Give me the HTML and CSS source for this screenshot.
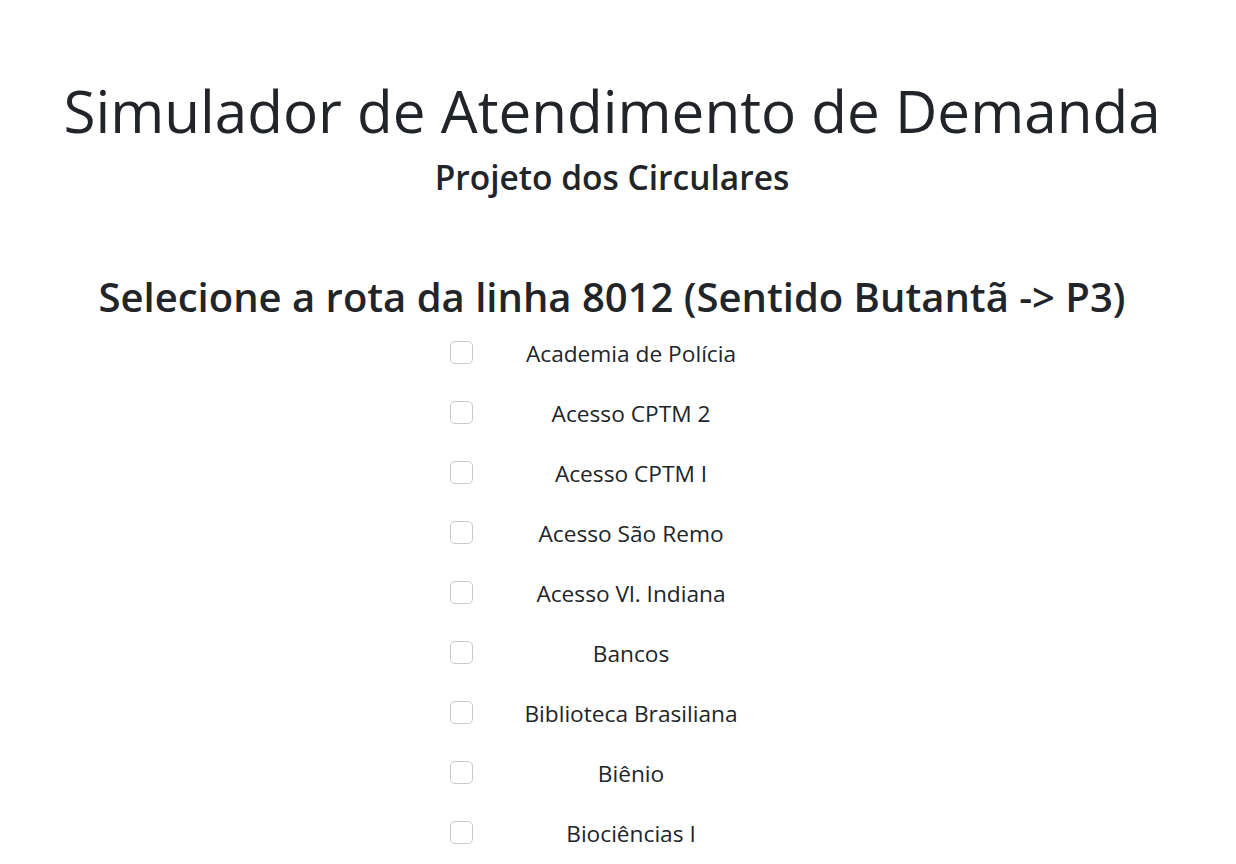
FILE: index.html
```html
<!DOCTYPE html>
<html lang="pt-BR">
<head>
<meta charset="utf-8">
<title>Simulador de Atendimento de Demanda</title>
<link rel="stylesheet" href="styles.css">
</head>
<body>
<main class="page">
  <header class="hero">
    <h1 class="title">Simulador de Atendimento de Demanda</h1>
    <h2 class="subtitle">Projeto dos Circulares</h2>
  </header>
  <section class="route">
    <h3 class="route-title">Selecione a rota da linha 8012 (Sentido Butantã -&gt; P3)</h3>
    <ul class="stops">
      <li class="stop"><span class="box"></span><span class="label">Academia de Polícia</span></li>
      <li class="stop"><span class="box"></span><span class="label">Acesso CPTM 2</span></li>
      <li class="stop"><span class="box"></span><span class="label">Acesso CPTM I</span></li>
      <li class="stop"><span class="box"></span><span class="label">Acesso São Remo</span></li>
      <li class="stop"><span class="box"></span><span class="label">Acesso Vl. Indiana</span></li>
      <li class="stop"><span class="box"></span><span class="label">Bancos</span></li>
      <li class="stop"><span class="box"></span><span class="label">Biblioteca Brasiliana</span></li>
      <li class="stop"><span class="box"></span><span class="label">Biênio</span></li>
      <li class="stop"><span class="box"></span><span class="label">Biociências I</span></li>
    </ul>
  </section>
</main>
</body>
</html>
```

FILE: styles.css
```css
html, body {
  margin: 0;
  padding: 0;
  background: #ffffff;
}
body {
  font-family: "Open Sans", "Noto Sans", sans-serif;
  color: #212529;
  overflow: hidden;
}
.page {
  width: 1224px;
  text-align: center;
}
.hero {
  padding-top: 69px;
}
.title {
  margin: 0;
  font-size: 58.4px;
  font-weight: 400;
  line-height: 84px;
}
.subtitle {
  margin: 4px 0 0;
  font-size: 33.5px;
  font-weight: 600;
  line-height: 40px;
}
.route {
  padding-top: 76px;
}
.route-title {
  margin: 0;
  font-size: 40px;
  font-weight: 600;
  line-height: 48px;
}
.stops {
  list-style: none;
  margin: 1px auto 0;
  padding: 0;
  width: 324px;
}
.stop {
  display: flex;
  align-items: center;
  height: 60px;
}
.box {
  box-sizing: border-box;
  width: 23px;
  height: 23px;
  border: 1px solid #c9c9c9;
  border-radius: 5px;
  flex: none;
}
.label {
  flex: 1;
  margin-left: 15px;
  padding-top: 3px;
  text-align: center;
  font-size: 22.7px;
}
```
